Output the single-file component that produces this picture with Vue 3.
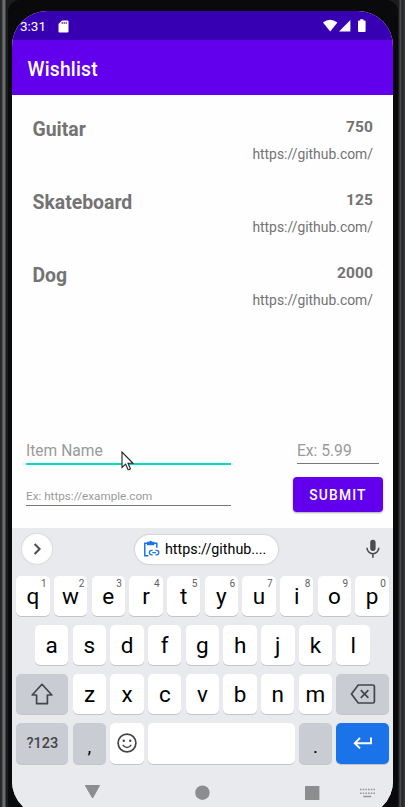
<script setup>
const items = [
  { name: 'Guitar', price: '750', url: 'https://github.com/' },
  { name: 'Skateboard', price: '125', url: 'https://github.com/' },
  { name: 'Dog', price: '2000', url: 'https://github.com/' },
]
const rowOne = [...'qwertyuiop'].map((letter, i) => ({ letter, hint: (i + 1) % 10 }))
const rowTwo = [...'asdfghjkl']
const rowThree = [...'zxcvbnm']
</script>

<template>
  <div class="device">
    <div class="bezel">
      <div class="screen">
        <div class="status">
          <span class="clock">3:31</span>
          <svg class="sd" width="11" height="13" viewBox="0 0 11 13">
            <path d="M4 .5h5.5a1 1 0 0 1 1 1v10a1 1 0 0 1-1 1h-8a1 1 0 0 1-1-1V4z" fill="#fff" />
            <path d="M4.2 2v2M6.2 2v2M8.2 2v2" stroke="#3700b3" stroke-width=".9" />
          </svg>
          <svg class="signals" width="43" height="14" viewBox="0 0 43 14">
            <path d="M0 3.5Q7 -2 14.4 3.5L7.2 12.6z" fill="#fff" />
            <path d="M27.4 .9V12.4H16z" fill="#fff" />
            <path d="M36 1.4h1.2V.2h3.2v1.2h1.2a1 1 0 0 1 1 1v9.6a1 1 0 0 1-1 1H36a1 1 0 0 1-1-1V2.400a1 1 0 0 1 1-1z" fill="#fff" />
          </svg>
        </div>

        <header class="appbar">Wishlist</header>

        <main class="content">
          <ul class="list">
            <li v-for="item in items" :key="item.name" class="item">
              <span class="name">{{ item.name }}</span>
              <span class="details">
                <span class="price">{{ item.price }}</span>
                <span class="url">{{ item.url }}</span>
              </span>
            </li>
          </ul>
          <form class="form">
            <div class="field focused"><span>Item Name</span></div>
            <div class="field cost"><span>Ex: 5.99</span></div>
            <div class="field link"><span>Ex: https://example.com</span></div>
            <button type="button" class="submit">SUBMIT</button>
          </form>
          <svg class="cursor" width="14" height="21" viewBox="0 0 14 21">
            <path d="M1 1v15.500l3.600-3.400 2.500 5.600q1.500.4 2.300-.9L7 12.300h5z" fill="#fff" stroke="#222" stroke-width="1.100" />
          </svg>
        </main>

        <section class="keyboard">
          <div class="suggestions">
            <div class="expand">
              <svg width="30" height="30" viewBox="0 0 30 30">
                <path d="M12.600 10l5 5-5 5" fill="none" stroke="#4c4d50" stroke-width="2" />
              </svg>
            </div>
            <div class="clip">
              <svg width="17" height="18" viewBox="0 0 17 18" fill="none" stroke="#1a73e8">
                <path d="M5.500 15.800H1.800V3.200H4M11 3.200h2.800v4.600" stroke-width="1.500" />
                <path d="M4 1.800h2.200a1.500 1.500 0 0 1 2.800 0h2.200v3.400H4z" fill="#1a73e8" stroke="none" />
                <path d="M9.700 10.400H8.600a2.200 2.200 0 0 0 0 4.400h1.100M12.500 10.400h1.100a2.200 2.200 0 0 1 0 4.400h-1.100M9.300 12.600h3.600" stroke-width="1.300" />
              </svg>
              <span>https://github....</span>
            </div>
            <svg class="mic" width="14" height="20" viewBox="0 0 14 20">
              <rect x="4.200" y=".8" width="5.400" height="11.200" rx="2.700" fill="#4a4b4e" />
              <path d="M1 8.800a5.900 5.900 0 0 0 11.800 0M6.900 14.800v4" fill="none" stroke="#4a4b4e" stroke-width="1.600" />
            </svg>
          </div>

          <div class="keys">
            <div class="row">
              <div v-for="key in rowOne" :key="key.letter" class="key">
                <span class="letter">{{ key.letter }}</span><span class="hint">{{ key.hint }}</span>
              </div>
            </div>
            <div class="row middle">
              <div v-for="key in rowTwo" :key="key" class="key"><span class="letter">{{ key }}</span></div>
            </div>
            <div class="row">
              <div class="key wide dim">
                <svg width="24" height="22" viewBox="0 0 24 22">
                  <path d="M12 1.300L21.800 12H17.400v8.700H6.600V12H2.200z" fill="none" stroke="#444548" stroke-width="1.700" stroke-linejoin="round" />
                </svg>
              </div>
              <div v-for="key in rowThree" :key="key" class="key"><span class="letter">{{ key }}</span></div>
              <div class="key wide dim">
                <svg width="26" height="20" viewBox="0 0 26 20" fill="none" stroke="#444548" stroke-width="1.700">
                  <path d="M8.200 1h14.600q1.600 0 1.600 1.600v14.800q0 1.600-1.600 1.600H8.200L1.500 10z" />
                  <path d="M10.800 6.200l7.600 7.600M18.400 6.200l-7.600 7.600" />
                </svg>
              </div>
            </div>
            <div class="row last">
              <div class="key wide dim symbols">?123</div>
              <div class="key dim mark">,</div>
              <div class="key">
                <svg width="20" height="20" viewBox="0 0 20 20">
                  <circle cx="10" cy="10" r="8.900" fill="none" stroke="#444548" stroke-width="1.700" />
                  <circle cx="6.800" cy="7.800" r="1.200" fill="#444548" />
                  <circle cx="13.200" cy="7.800" r="1.200" fill="#444548" />
                  <path d="M5.800 11.800q1.600 2.600 4.200 2.600t4.200-2.600" fill="none" stroke="#444548" stroke-width="1.500" />
                </svg>
              </div>
              <div class="key space"></div>
              <div class="key dim mark">.</div>
              <div class="key wide enter">
                <svg width="20" height="14" viewBox="0 0 20 14">
                  <path d="M18 1.500V7.200H2M7 2L1.800 7.200 7 12.400" fill="none" stroke="#fff" stroke-width="1.900" />
                </svg>
              </div>
            </div>
          </div>

          <nav class="nav">
            <svg width="382" height="30" viewBox="12 777 382 30">
              <path d="M85.300 785.500h14.200L92.600 798z" fill="#8b8d8e" stroke="#8b8d8e" stroke-linejoin="round" />
              <circle cx="202.400" cy="792.700" r="7.200" fill="#8b8d8e" />
              <rect x="305" y="786" width="14.400" height="14" rx=".6" fill="#8b8d8e" />
              <path d="M360 789.500h15M360 793.300h15" stroke="#96989a" stroke-width="1.600" stroke-dasharray="1.600 1.080" />
              <path d="M363.200 796.500h8" stroke="#96989a" stroke-width="1.400" />
            </svg>
          </nav>
        </section>
      </div>
    </div>
  </div>
</template>

<style>
body {
  background: #08080a;
}
</style>

<style scoped>
* {
  box-sizing: border-box;
}
.device {
  width: 405px;
  height: 807px;
  overflow: hidden;
  font-family: Roboto, "Liberation Sans", sans-serif;
  background: linear-gradient(90deg, #202123 0, #343638 2px, #696b6d 3px, #696b6d 5px, #1b1c1d 6px, #1b1c1d 399px, #555558 400px, #242528 402px, #37393c 405px);
}
.bezel {
  width: 390px;
  height: 848px;
  margin-left: 8px;
  padding: 11px 7px 0 4px;
  background: #0a090b;
  border-radius: 12px 12px 48px 48px;
}
.screen {
  display: flex;
  flex-direction: column;
  width: 381px;
  height: 804.5px;
  overflow: hidden;
  border-radius: 35px;
  background: #fefefe;
}
.status {
  display: flex;
  flex: none;
  align-items: center;
  height: 29px;
  padding: 1px 27px 0 8px;
  background: #3700b3;
  color: #fff;
}
.clock {
  width: 38px;
  font-size: 13.5px;
}
.signals {
  margin-left: auto;
}
.appbar {
  flex: none;
  height: 55px;
  padding-left: 15.5px;
  background: #6200ee;
  color: #fff;
  font-size: 19.3px;
  font-weight: 500;
  line-height: 59px;
  letter-spacing: 0.2px;
}
.content {
  position: relative;
  display: flex;
  flex: none;
  flex-direction: column;
  justify-content: space-between;
  height: 432.5px;
  padding: 22px 10px 15px 14px;
}
.list {
  margin: 0;
  padding: 0;
  list-style: none;
}
.item {
  display: flex;
  justify-content: space-between;
  height: 72.8px;
  padding: 0 10px 0 6.500px;
  color: #737373;
}
.name {
  font-size: 19.4px;
  font-weight: 700;
  line-height: 25px;
}
.details {
  display: flex;
  flex-direction: column;
  align-items: flex-end;
}
.price {
  font-size: 15.5px;
  font-weight: 700;
  line-height: 20px;
  letter-spacing: 0.1px;
}
.url {
  margin-top: 7px;
  font-size: 13.9px;
  line-height: 21px;
}
.form {
  display: grid;
  grid-template-columns: 205px 90px;
  grid-template-rows: 27px 36px;
  row-gap: 12px;
  justify-content: space-between;
  margin: 0;
}
.field {
  border-bottom: 1px solid #777;
  color: #9a9a9a;
  font-size: 15.6px;
  white-space: nowrap;
}
.field span {
  display: block;
  line-height: 27px;
}
.focused {
  border-bottom: 2.500px solid #03dac5;
}
.cost {
  height: 26px;
  margin: 0 4px;
}
.link {
  height: 29px;
  font-size: 11.7px;
}
.link span {
  line-height: 38px;
}
.submit {
  height: 35px;
  padding: 0;
  border: 0;
  border-radius: 4px;
  background: #6200ee;
  box-shadow: 0 1px 2px #0005;
  color: #fff;
  font: 500 13.800px/36px Roboto, sans-serif;
  letter-spacing: 1.200px;
}
.cursor {
  position: absolute;
  left: 108.500px;
  top: 355.500px;
}
.keyboard {
  flex: 1;
  background: #e8eaed;
}
.suggestions {
  display: flex;
  align-items: center;
  justify-content: space-between;
  height: 43px;
  padding: 0 13px 0 10px;
}
.expand {
  width: 30px;
  height: 30px;
  border-radius: 50%;
  background: #fff;
  box-shadow: 0 0 1px 1px #d9dbde;
}
.clip {
  display: flex;
  align-items: center;
  width: 143px;
  height: 29px;
  margin-left: -5px;
  padding-left: 8px;
  gap: 5px;
  border-radius: 15px;
  background: #fff;
  box-shadow: 0 0 1px 1px #d3d5d8;
  color: #000;
  font-size: 14.300px;
}
.keys {
  display: flex;
  flex-direction: column;
  gap: 9.5px;
  padding: 5.500px 4.300px 0 4.200px;
}
.row {
  display: flex;
  gap: 4.300px;
  height: 39.500px;
}
.row.middle {
  padding: 0 18.800px;
}
.row.last {
  height: 40.500px;
}
.key {
  position: relative;
  display: flex;
  flex: 1;
  align-items: center;
  justify-content: center;
  border-radius: 5px;
  background: #fff;
  box-shadow: 0 1px 0 #c3c5c9;
  color: #000;
}
.letter {
  font-size: 22.500px;
  line-height: 38px;
}
.hint {
  position: absolute;
  top: 2px;
  right: 3px;
  color: #5d5e60;
  font-size: 10px;
}
.wide {
  flex: 0 0 52.300px;
}
.dim {
  background: #caccd4;
}
.symbols {
  color: #444548;
  font-size: 14.500px;
  font-weight: 500;
}
.mark {
  padding-top: 7px;
  font-size: 19px;
}
.space {
  flex: 0 0 146.700px;
}
.enter {
  background: #1a73e8;
}
.nav {
  margin-top: 13px;
}
</style>
